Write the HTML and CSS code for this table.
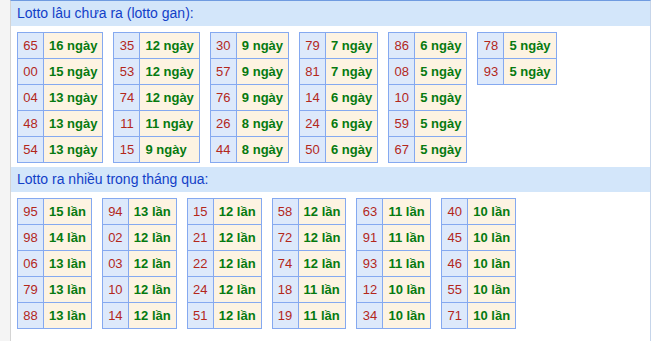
FILE: index.html
```html
<!DOCTYPE html>
<html lang="vi">
<head>
<meta charset="utf-8">
<title>Lotto</title>
<link rel="stylesheet" href="styles.css">
</head>
<body>
<div class="box">
  <div class="head">Lotto lâu chưa ra (lotto gan):</div>
  <div class="tables">
    <table class="lt"><tr><td class="n">65</td><td class="v">16 ngày</td></tr><tr><td class="n">00</td><td class="v">15 ngày</td></tr><tr><td class="n">04</td><td class="v">13 ngày</td></tr><tr><td class="n">48</td><td class="v">13 ngày</td></tr><tr><td class="n">54</td><td class="v">13 ngày</td></tr></table>
    <table class="lt"><tr><td class="n">35</td><td class="v">12 ngày</td></tr><tr><td class="n">53</td><td class="v">12 ngày</td></tr><tr><td class="n">74</td><td class="v">12 ngày</td></tr><tr><td class="n">11</td><td class="v">11 ngày</td></tr><tr><td class="n">15</td><td class="v">9 ngày</td></tr></table>
    <table class="lt"><tr><td class="n">30</td><td class="v">9 ngày</td></tr><tr><td class="n">57</td><td class="v">9 ngày</td></tr><tr><td class="n">76</td><td class="v">9 ngày</td></tr><tr><td class="n">26</td><td class="v">8 ngày</td></tr><tr><td class="n">44</td><td class="v">8 ngày</td></tr></table>
    <table class="lt"><tr><td class="n">79</td><td class="v">7 ngày</td></tr><tr><td class="n">81</td><td class="v">7 ngày</td></tr><tr><td class="n">14</td><td class="v">6 ngày</td></tr><tr><td class="n">24</td><td class="v">6 ngày</td></tr><tr><td class="n">50</td><td class="v">6 ngày</td></tr></table>
    <table class="lt"><tr><td class="n">86</td><td class="v">6 ngày</td></tr><tr><td class="n">08</td><td class="v">5 ngày</td></tr><tr><td class="n">10</td><td class="v">5 ngày</td></tr><tr><td class="n">59</td><td class="v">5 ngày</td></tr><tr><td class="n">67</td><td class="v">5 ngày</td></tr></table>
    <table class="lt"><tr><td class="n">78</td><td class="v">5 ngày</td></tr><tr><td class="n">93</td><td class="v">5 ngày</td></tr></table>
  </div>
  <div class="head">Lotto ra nhiều trong tháng qua:</div>
  <div class="tables">
    <table class="lt"><tr><td class="n">95</td><td class="v">15 lần</td></tr><tr><td class="n">98</td><td class="v">14 lần</td></tr><tr><td class="n">06</td><td class="v">13 lần</td></tr><tr><td class="n">79</td><td class="v">13 lần</td></tr><tr><td class="n">88</td><td class="v">13 lần</td></tr></table>
    <table class="lt"><tr><td class="n">94</td><td class="v">13 lần</td></tr><tr><td class="n">02</td><td class="v">12 lần</td></tr><tr><td class="n">03</td><td class="v">12 lần</td></tr><tr><td class="n">10</td><td class="v">12 lần</td></tr><tr><td class="n">14</td><td class="v">12 lần</td></tr></table>
    <table class="lt"><tr><td class="n">15</td><td class="v">12 lần</td></tr><tr><td class="n">21</td><td class="v">12 lần</td></tr><tr><td class="n">22</td><td class="v">12 lần</td></tr><tr><td class="n">24</td><td class="v">12 lần</td></tr><tr><td class="n">51</td><td class="v">12 lần</td></tr></table>
    <table class="lt"><tr><td class="n">58</td><td class="v">12 lần</td></tr><tr><td class="n">72</td><td class="v">12 lần</td></tr><tr><td class="n">74</td><td class="v">12 lần</td></tr><tr><td class="n">18</td><td class="v">11 lần</td></tr><tr><td class="n">19</td><td class="v">11 lần</td></tr></table>
    <table class="lt"><tr><td class="n">63</td><td class="v">11 lần</td></tr><tr><td class="n">91</td><td class="v">11 lần</td></tr><tr><td class="n">93</td><td class="v">11 lần</td></tr><tr><td class="n">12</td><td class="v">10 lần</td></tr><tr><td class="n">34</td><td class="v">10 lần</td></tr></table>
    <table class="lt"><tr><td class="n">40</td><td class="v">10 lần</td></tr><tr><td class="n">45</td><td class="v">10 lần</td></tr><tr><td class="n">46</td><td class="v">10 lần</td></tr><tr><td class="n">55</td><td class="v">10 lần</td></tr><tr><td class="n">71</td><td class="v">10 lần</td></tr></table>
  </div>
</div>
</body>
</html>
```
FILE: styles.css
```css
html, body {
  margin: 0;
  padding: 0;
  background: #f4f4f4;
  font-family: "Liberation Sans", Arial, sans-serif;
}
.box {
  margin-left: 10px;
  width: 639px;
  min-height: 360px;
  background: #fff;
  border-left: 1px solid #d4d4d4;
  border-right: 1px solid #c6d5ea;
  border-top: 1px solid #6f9be0;
}
.head {
  height: 25px;
  line-height: 25px;
  padding-left: 6px;
  background: #d3e6fa;
  color: #1240c8;
  font-size: 14px;
}
.tables {
  display: flex;
  align-items: flex-start;
  gap: 10px;
  padding: 6px 6px 4px;
}
.lt {
  border-collapse: collapse;
  font-size: 13px;
}
.lt td {
  border: 1px solid #85a9f0;
  height: 25px;
  padding: 0;
  line-height: 25px;
}
.lt .n {
  width: 25px;
  background: #dde9fb;
  color: #b3271b;
  text-align: center;
}
.lt .v {
  background: #fdf3e2;
  color: #067a10;
  font-weight: bold;
  padding: 0 5px;
}
```
